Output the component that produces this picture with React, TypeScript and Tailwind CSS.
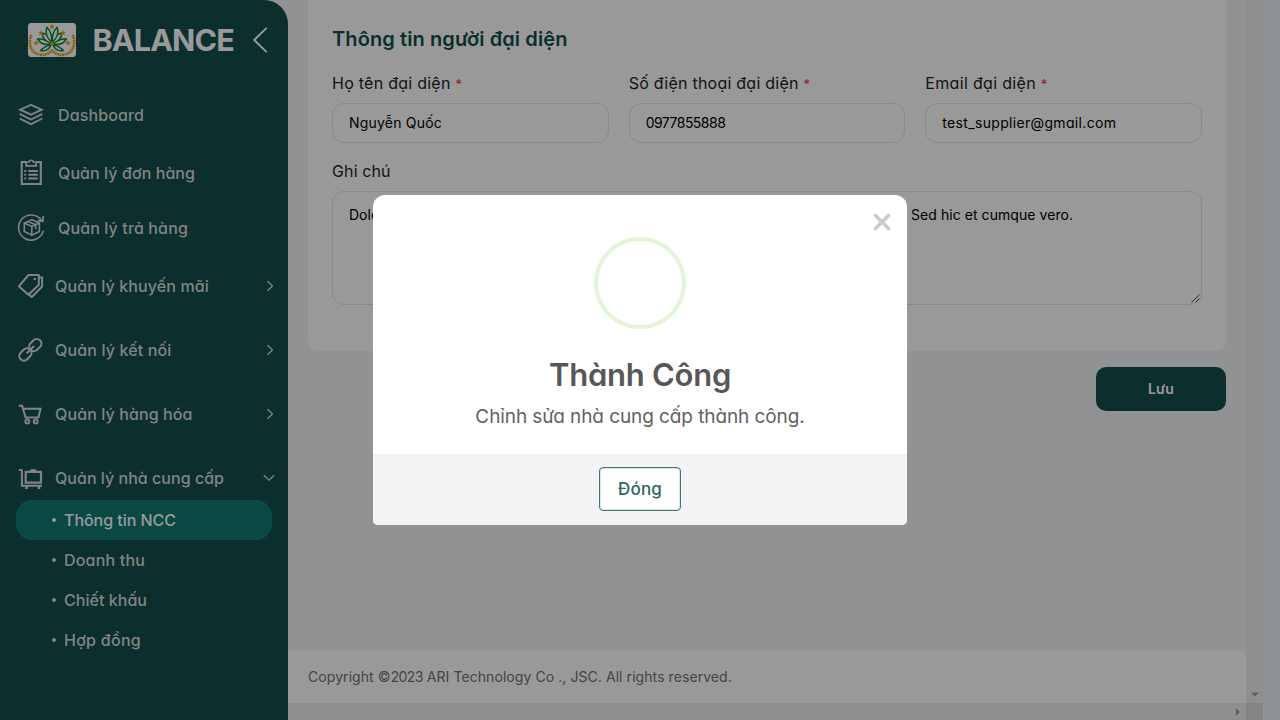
import type { ReactNode } from "react";

const iconProps = {
  width: 28,
  height: 28,
  viewBox: "0 0 28 28",
  fill: "none",
  stroke: "currentColor",
  strokeWidth: 2,
  className: "shrink-0",
};

const LayersIcon = () => (
  <svg {...iconProps} strokeWidth={1.9}>
    <path d="M14 3.8 24.8 8.7 14 13.7 3.2 8.7Z" />
    <path d="M2.6 12.9 14 18.5l11.4-5.6M2.6 17.5 14 23.1l11.4-5.6" />
  </svg>
);

const ClipboardIcon = () => (
  <svg {...iconProps}>
    <path d="M9 3H4.7v22h19.1V3H19.5" strokeWidth="2.1" />
    <path d="M9.2 3v3.8h9.9V3h-2.8a2.2 2.2 0 0 0-4.300 0Z" strokeWidth="1.7" />
    <path d="M7.300 12h1.900M7.300 15.800h1.900M7.300 19.600h1.900M11.300 12h9.500M11.300 15.800h9.500M11.300 19.600h9.500" />
  </svg>
);

const ReturnIcon = () => (
  <svg {...iconProps} strokeWidth={1.5}>
    <path d="M26.400 16.600A12.600 12.600 0 1 1 24.300 6" />
    <path d="M26.200 2.300 25.800 7.200 20.800 6.500" strokeWidth="1.800" />
    <path d="M14.800 5.800 22.400 9v8.400l-7.600 3.800-7.500-3.800V9ZM7.300 9l7.500 3.400L22.400 9M14.800 12.400v8.800M11 7.500l7.700 3.300v4.200" strokeWidth="1.600" />
  </svg>
);

const TagsIcon = () => (
  <svg {...iconProps}>
    <path d="M1.800 14.300 11.500 3H21.800v9.800L11.500 22.700Z" strokeLinejoin="round" />
    <path d="M22 5.600h3.100v8.900L14.700 25.200l-2.800-2.600" />
    <circle cx="17.800" cy="7" r="1.200" fill="currentColor" stroke="none" />
  </svg>
);

const LinkIcon = () => (
  <svg {...iconProps} strokeWidth={2.1}>
    <rect x="11.600" y="4.500" width="13.400" height="9.200" rx="4.600" transform="rotate(-45 18.300 9.100)" />
    <rect x="1.700" y="13.900" width="13.400" height="9.200" rx="4.600" transform="rotate(-45 8.400 18.500)" />
    <path d="m9.800 17.200 7.200-7.100" />
  </svg>
);

const CartIcon = () => (
  <svg {...iconProps}>
    <path d="M1.800 5.700H5.100L8.600 17.400H21.400L23.600 8.700H6.200" />
    <circle cx="10.300" cy="21.500" r="1.900" />
    <circle cx="18.700" cy="21.500" r="1.900" />
  </svg>
);

const LuggageIcon = () => (
  <svg {...iconProps}>
    <path d="M1.800 5.800 4.900 6.300V21.800H25" />
    <rect x="8.700" y="7.900" width="15.300" height="10.700" strokeWidth="2.200" />
    <path d="M13.600 7.600c0-2 5.200-2 5.200 0" />
    <path d="M9.500 21.800v3.300M22 21.800v3.300" strokeWidth="2.600" />
  </svg>
);

const Star = ({ x, y }: { x: number; y: number }) => (
  <path
    transform={`translate(${x} ${y})`}
    fill="#eca410"
    d="M0-2.900.8-.9 2.900-.8 1.200.6 1.800 2.700 0 1.500-1.800 2.700-1.200.6-2.900-.8-.8-.9Z"
  />
);

const Logo = () => (
  <svg width="48" height="34" viewBox="0 0 48 34" className="shrink-0">
    <rect width="48" height="34" rx="3.500" fill="#fff" />
    <g fill="none" stroke="#e0a01c" strokeWidth="2.800" strokeDasharray="1.800 .7">
      <path d="M3.300 12C.5 19 1.500 26 7 29.800c6 3.200 13 2.800 17-3" />
      <path d="M44.700 12C47.500 19 46.500 26 41 29.800c-6 3.200-13 2.800-17-3" />
    </g>
    <g fill="#fff" stroke="#118340" strokeWidth="1.500" strokeLinejoin="round">
      <path d="M23 22C18.500 22.500 15 25 12.500 27.500 17 28.500 21 26.500 23 22Z" />
      <path d="M25 22C29.500 22.500 33 25 35.500 27.500 31 28.500 27 26.500 25 22Z" />
      <path d="M23 21C18.500 16.500 14.500 15.500 9.500 16 12.500 20.500 17 22.500 23 21Z" />
      <path d="M25 21C29.500 16.500 33.500 15.500 38.500 16 35.500 20.500 31 22.500 25 21Z" />
      <path d="M23.300 20C22.500 15 19 11.500 14 9.800 14.500 15 18 19 23.300 20Z" />
      <path d="M24.700 20C25.500 15 29 11.500 34 9.800 33.500 15 30 19 24.700 20Z" />
      <path d="M23.500 19C24.300 12 22.500 8 18.800 4.300 17.300 9 18.500 15 23.500 19Z" />
      <path d="M24.500 19C23.700 12 25.500 8 29.200 4.300 30.700 9 29.500 15 24.500 19Z" />
    </g>
    <Star x={24} y={3.500} />
    <Star x={13} y={9.800} />
    <Star x={35} y={9.800} />
    <Star x={8} y={19.800} />
    <Star x={40} y={19.800} />
    <Star x={24} y={20.300} />
  </svg>
);

const ChevronRight = () => (
  <svg width="8" height="12" viewBox="0 0 8 12" fill="none" stroke="#d5eaed" strokeWidth="1.200" className="shrink-0">
    <path d="m1.500 1.300 5 4.700-5 4.700" />
  </svg>
);

const ChevronDown = () => (
  <svg width="12" height="8" viewBox="0 0 12 8" fill="none" stroke="#d6e2e3" strokeWidth="1.200" className="shrink-0">
    <path d="m.8 1.200 5.200 5 5.200-5" />
  </svg>
);

const topLinks: { icon: ReactNode; label: string; style: string }[] = [
  { icon: <LayersIcon />, label: "Dashboard", style: "h-[58px] tracking-[0.12px]" },
  { icon: <ClipboardIcon />, label: "Quản lý đơn hàng", style: "h-[58px] tracking-[0.08px]" },
  { icon: <ReturnIcon />, label: "Quản lý trả hàng", style: "h-[52px] tracking-[0.13px]" },
];

const groups: { icon: ReactNode; label: string; style: string }[] = [
  { icon: <TagsIcon />, label: "Quản lý khuyến mãi", style: "tracking-[0.12px]" },
  { icon: <LinkIcon />, label: "Quản lý kết nối", style: "tracking-[0.14px]" },
  { icon: <CartIcon />, label: "Quản lý hàng hóa", style: "tracking-[0.11px]" },
];

const subLinks = [
  { label: "Thông tin NCC", style: "bg-[#127871] text-white tracking-[-0.04px]" },
  { label: "Doanh thu", style: "tracking-[0.19px]" },
  { label: "Chiết khấu", style: "tracking-[0.04px]" },
  { label: "Hợp đồng", style: "tracking-[0.28px]" },
];

function Sidebar() {
  return (
    <aside className="h-full w-72 shrink-0 rounded-tr-3xl bg-[#144f4c] text-base font-medium text-[#d8dada]">
      <header className="flex h-20 items-center pl-7">
        <Logo />
        <span className="ml-[16.5px] w-[144.500px] text-[30.5px] font-bold tracking-[-0.85px] text-white">BALANCE</span>
        <svg width="18" height="28" viewBox="0 0 18 28" fill="none" stroke="#fff" strokeWidth="1.900" className="ml-[14px]">
          <path d="M15.700 1.900 3.200 14l12.500 12.100" />
        </svg>
      </header>
      <nav className="mt-1.5 flex flex-col">
        {topLinks.map((l) => (
          <a key={l.label} className={`flex items-center gap-[13px] pl-[17px] ${l.style}`}>
            {l.icon}
            <span>{l.label}</span>
          </a>
        ))}
        {groups.map((g) => (
          <a key={g.label} className={`flex h-16 items-center gap-2.5 pr-3.5 pl-[17px] ${g.style}`}>
            {g.icon}
            <span className="grow">{g.label}</span>
            <ChevronRight />
          </a>
        ))}
        <a className="flex h-[54px] items-center gap-2.5 pt-2.5 pr-[13px] pl-[17px] tracking-[0.03px]">
          <LuggageIcon />
          <span className="grow">Quản lý nhà cung cấp</span>
          <ChevronDown />
        </a>
        <div className="mx-4">
          {subLinks.map((s) => (
            <a key={s.label} className={`flex h-10 items-center gap-2 rounded-2xl pl-9 ${s.style}`}>
              <i className="size-1 rounded-full bg-current" />
              {s.label}
            </a>
          ))}
        </div>
      </nav>
    </aside>
  );
}

function Field({ label, value, labelStyle, valueStyle }: { label: string; value: string; labelStyle: string; valueStyle: string }) {
  return (
    <div>
      <div className={`h-6 text-base leading-6 text-[#212529] ${labelStyle}`}>
        {label} <span className="text-[13px] text-[#dc3545]">*</span>
      </div>
      <div className={`mt-2 flex h-10 items-center rounded-xl border border-[#e4e4e6] px-4 text-sm text-black ${valueStyle}`}>
        {value}
      </div>
    </div>
  );
}

function Content() {
  return (
    <div className="flex min-w-0 grow flex-col">
      <div className="flex h-[703px]">
        <main className="flex grow flex-col">
          <div className="flex grow flex-col pr-5 pl-5">
            <section className="h-[351px] rounded-b-[10px] bg-white px-6 pt-[25px]">
              <h2 className="h-7 text-xl leading-7 font-semibold tracking-[0.1px] text-[#144f4c]">Thông tin người đại diện</h2>
              <div className="mt-[18px] grid grid-cols-3 gap-5">
                <Field label="Họ tên đại diện" value="Nguyễn Quốc" labelStyle="tracking-[0.26px]" valueStyle="tracking-[0.2px]" />
                <Field label="Số điện thoại đại diện" value="0977855888" labelStyle="tracking-[0.24px]" valueStyle="tracking-[-0.52px]" />
                <Field label="Email đại diện" value="test_supplier@gmail.com" labelStyle="tracking-[0.32px]" valueStyle="tracking-[0.33px]" />
              </div>
              <div className="mt-4 h-6 text-base leading-6 tracking-[0.12px] text-[#212529]">Ghi chú</div>
              <div className="relative mt-2 flex h-[114px] rounded-xl border border-[#e4e4e6] px-4 pt-3 text-sm leading-[22px] text-black">
                <span className="w-[562px]">Dolor</span>
                <span className="tracking-[0.06px]">Sed hic et cumque vero.</span>
                <svg width="9" height="9" viewBox="0 0 9 9" stroke="#444" className="absolute right-px bottom-px">
                  <path d="M.5 8.500l8-8M4.500 8.500l4-4" />
                </svg>
              </div>
            </section>
            <button className="mt-4 h-11 w-[130px] self-end rounded-[10px] bg-[#144f4c] text-sm font-semibold tracking-[0.15px] text-white">
              Lưu
            </button>
          </div>
          <footer className="flex h-[52px] items-center bg-white pl-5 text-sm text-[#6c757d]">
            <p className="tracking-[0.07px]">
              Copyright ©<span className="tracking-[-0.600px]">2023</span> ARI Technology Co ., JSC. All rights reserved.
            </p>
          </footer>
        </main>
        <div className="flex w-[17px] shrink-0 items-end justify-center bg-[#eeeeee] pb-1.5">
          <svg width="8" height="5" viewBox="0 0 8 5" fill="#a0a0a0">
            <path d="M0 .5h8l-4 4z" />
          </svg>
        </div>
      </div>
      <div className="flex h-[17px]">
        <div className="flex grow items-center justify-end bg-[#efefef] pr-1.5">
          <svg width="4" height="8" viewBox="0 0 4 8" fill="#a0a0a0">
            <path d="M0 0v8l4-4z" />
          </svg>
        </div>
        <div className="w-[17px] bg-[#dcdcdc]" />
      </div>
    </div>
  );
}

function SuccessDialog() {
  return (
    <div className="absolute inset-0 flex items-center justify-center bg-black/40">
      <div role="dialog" className="relative flex h-[330px] w-[534px] flex-col items-center overflow-hidden rounded-t-xl rounded-b-[5px] bg-white text-[#575757]">
        <svg width="18" height="18" viewBox="0 0 18 18" stroke="#ccc" strokeWidth="3.600" strokeLinecap="round" className="absolute top-[18px] right-4">
          <path d="m2.500 2.500 13 13m0-13-13 13" />
        </svg>
        <div className="mt-[42px] size-[92px] shrink-0 rounded-full border-4 border-[#e3f5d9]" />
        <h1 className="mt-[26px] h-10 text-[31px] leading-10 font-semibold tracking-[-0.26px]">Thành Công</h1>
        <p className="mt-2 h-7 text-[19px] leading-7 tracking-[-0.09px] text-[#626262]">Chỉnh sửa nhà cung cấp thành công.</p>
        <div className="mt-auto flex h-[71px] w-full justify-center bg-[#f1f3f5] pt-[13px]">
          <button className="h-11 w-[82px] rounded border border-[#3f7874] bg-white pt-px text-[17px] font-medium tracking-[0.18px] text-[#2f6562] ring-1 ring-[#3f7874]/20 ring-inset">
            Đóng
          </button>
        </div>
      </div>
    </div>
  );
}

export default function App() {
  return (
    <div className="relative flex h-[720px] w-[1280px] overflow-hidden bg-[#f2f4f7] font-['Inter','Noto_Sans',sans-serif] [font-feature-settings:'cv11']">
      <Sidebar />
      <Content />
      <div className="w-[17px] shrink-0 bg-[#edf3fc]" />
      <SuccessDialog />
    </div>
  );
}
